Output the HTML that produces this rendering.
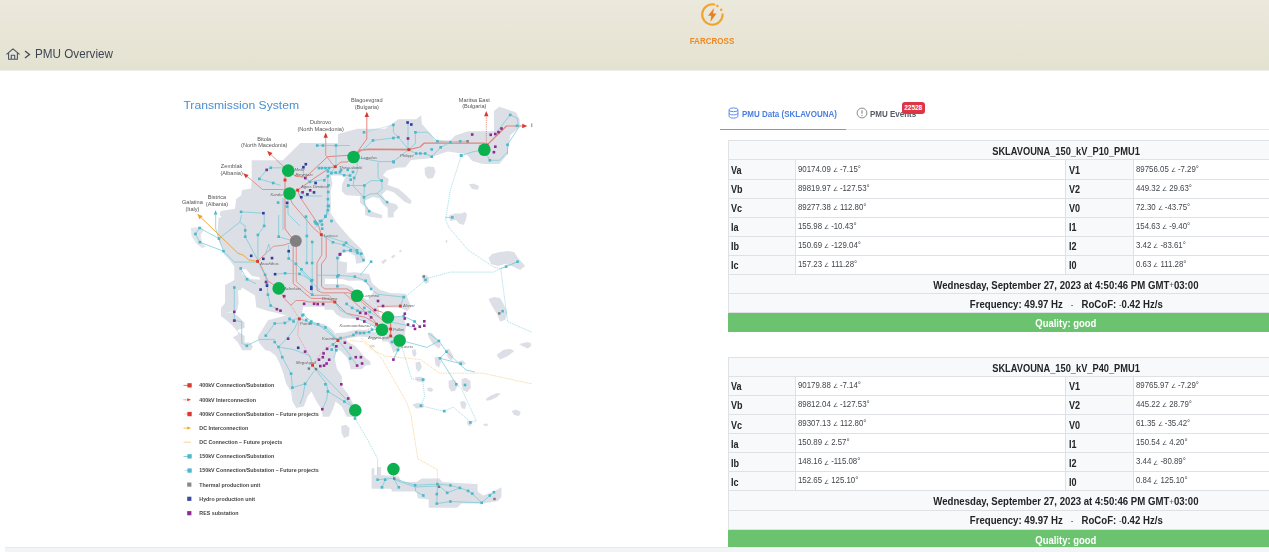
<!DOCTYPE html>
<html><head><meta charset="utf-8"><title>PMU Overview</title>
<style>
*{box-sizing:border-box;margin:0;padding:0}
html,body{width:1269px;height:552px;overflow:hidden;background:#fff;font-family:"Liberation Sans",sans-serif;}
#hdr{position:absolute;left:0;top:0;width:1269px;height:70.5px;background:linear-gradient(180deg,#ebe9dc 0%,#e8e5d6 55%,#e5e3d2 85%,#e3e2d2 100%);border-bottom:1px solid #efeee6}
#crumb{position:absolute;left:34.8px;top:47.3px;font-size:12.5px;transform:scaleX(0.935);transform-origin:0 50%;color:#3d4657;white-space:nowrap;line-height:14px}
#brand{position:absolute;left:682px;top:35.5px;width:60px;text-align:center;font-size:9.1px;font-weight:bold;color:#ec8a25;transform:scaleX(0.885);line-height:10px}
#tabs{position:absolute;left:720px;top:96px;width:560px;height:34px;border-bottom:1px solid #e3e6ec}
#tabs .act{position:absolute;left:0;top:32.7px;width:126px;height:1.6px;background:#6b9af0}
.tab{position:absolute;top:13.1px;font-size:9.2px;transform:scaleX(0.87);transform-origin:0 50%;font-weight:bold;line-height:10px;white-space:nowrap}
#badge{position:absolute;left:181.8px;top:6px;width:22.8px;height:12.4px;border-radius:3px;background:#dc3545;color:#fff;font-size:6.5px;font-weight:bold;text-align:center;line-height:12px}
table.pmu{position:absolute;left:727.8px;width:676px;border-collapse:collapse;table-layout:fixed;font-size:10px;color:#212529}
table.pmu td{height:19.09px;border:1px solid #dee2e6;padding:0 0 0 3px;vertical-align:middle;white-space:nowrap;overflow:hidden}
table.pmu td.l{background:#f8f9fa;font-weight:bold;font-size:10.4px;padding-left:2.5px;padding-top:1.8px}
.sx{display:inline-block;transform:scaleX(0.9);transform-origin:0 50%;white-space:nowrap}
td.l .sx{transform:scaleX(0.87)}
td.h .sx,td.q .sx{transform-origin:50% 50%}
td.q .sx{transform:scaleX(0.93)}
td.d .sx{transform:scaleX(0.934)}
td.v .sx{transform:scaleX(0.947)}
table.pmu td.v{font-size:8.3px;color:#40454b;padding-bottom:2px;padding-left:2.5px}
table.pmu td.h{background:#f8f9fa;font-weight:bold;text-align:center;font-size:10.3px;padding-left:0;padding-top:2.6px}
table.pmu td.q{background:#6cc36f;color:#fff;font-weight:bold;text-align:center;font-size:10.2px;padding-left:0;padding-top:2.8px;border-color:#6cc36f}
.a{font-size:6.2px;position:relative;top:0.2px}
.lt{font-weight:normal;color:#50555b;font-size:8.5px;position:relative;top:-0.3px}
#sbar{position:absolute;left:4.5px;top:546.9px;width:1265px;height:6px;background:#f3f4f6;border-top:1px solid #e8eaee}
</style></head><body>
<div id="hdr"></div>
<svg id="home" style="position:absolute;left:6px;top:47.5px" width="14" height="12" viewBox="0 0 14 12"><path d="M0.8 6.2 L7 0.9 L13.2 6.2 M2.6 5.2 V11.2 H11.4 V5.2 M5.3 11.2 V7.3 H8.7 V11.2" fill="none" stroke="#4a5568" stroke-width="1.1" stroke-linejoin="round" stroke-linecap="round"/></svg>
<svg style="position:absolute;left:23.5px;top:49.5px" width="7" height="9" viewBox="0 0 7 9"><path d="M1 1 L5.5 4.5 L1 8" fill="none" stroke="#3d4657" stroke-width="1.2"/></svg>
<div id="crumb">PMU Overview</div>
<svg id="logo" style="position:absolute;left:698px;top:0px" width="30" height="30" viewBox="0 0 30 30"><path d="M16.2 4.45 A10.2 10.2 0 1 0 24.6 14.3" fill="none" stroke="#f3a32b" stroke-width="2.1" stroke-linecap="round"/><circle cx="19.4" cy="6" r="1.25" fill="#f3a32b"/><circle cx="23.2" cy="9.7" r="1.25" fill="#f3a32b"/><path d="M16.1 8.1 L10 15.8 H13.3 L12.3 21.9 L18.5 13.4 H15 Z" fill="#ea7f20"/></svg>
<div id="brand">FARCROSS</div>

<div id="tabs"><div class="act"></div>
<svg style="position:absolute;left:8px;top:11px" width="11" height="12" viewBox="0 0 11 12"><ellipse cx="5.5" cy="2.8" rx="4.4" ry="1.9" fill="none" stroke="#5b8def" stroke-width="1"/><path d="M1.1 2.8 V9.2 C1.1 10.3 3.1 11.1 5.5 11.1 S9.9 10.3 9.9 9.2 V2.8 M1.1 6 C1.1 7.1 3.1 7.9 5.5 7.9 S9.9 7.1 9.9 6" fill="none" stroke="#5b8def" stroke-width="1"/></svg>
<div class="tab" style="left:21.5px;color:#4a7fe0">PMU Data (SKLAVOUNA)</div>
<svg style="position:absolute;left:135.5px;top:11px" width="12" height="12" viewBox="0 0 12 12"><circle cx="6" cy="6" r="4.9" fill="none" stroke="#6a6f77" stroke-width="0.8"/><path d="M6 3.2 V6.8" stroke="#6a6f77" stroke-width="0.9"/><circle cx="6" cy="8.5" r="0.55" fill="#6a6f77"/></svg>
<div class="tab" style="left:150px;color:#565c66">PMU Events</div>
<div id="badge">22528</div>
</div>

<table class="pmu" style="top:140.4px">
<colgroup><col style="width:67px"><col style="width:270.5px"><col style="width:67.5px"><col style="width:271px"></colgroup>
<tr><td class="h" colspan="4"><span class="sx">SKLAVOUNA_150_kV_P10_PMU1</span></td></tr>
<tr><td class="l"><span class="sx">Va</span></td><td class="v"><span class="sx">90174.09 <span class="a">∠</span> -7.15°</span></td><td class="l"><span class="sx">V1</span></td><td class="v"><span class="sx">89756.05 <span class="a">∠</span> -7.29°</span></td></tr>
<tr><td class="l"><span class="sx">Vb</span></td><td class="v"><span class="sx">89819.97 <span class="a">∠</span> -127.53°</span></td><td class="l"><span class="sx">V2</span></td><td class="v"><span class="sx">449.32 <span class="a">∠</span> 29.63°</span></td></tr>
<tr><td class="l"><span class="sx">Vc</span></td><td class="v"><span class="sx">89277.38 <span class="a">∠</span> 112.80°</span></td><td class="l"><span class="sx">V0</span></td><td class="v"><span class="sx">72.30 <span class="a">∠</span> -43.75°</span></td></tr>
<tr><td class="l"><span class="sx">Ia</span></td><td class="v"><span class="sx">155.98 <span class="a">∠</span> -10.43°</span></td><td class="l"><span class="sx">I1</span></td><td class="v"><span class="sx">154.63 <span class="a">∠</span> -9.40°</span></td></tr>
<tr><td class="l"><span class="sx">Ib</span></td><td class="v"><span class="sx">150.69 <span class="a">∠</span> -129.04°</span></td><td class="l"><span class="sx">I2</span></td><td class="v"><span class="sx">3.42 <span class="a">∠</span> -83.61°</span></td></tr>
<tr><td class="l"><span class="sx">Ic</span></td><td class="v"><span class="sx">157.23 <span class="a">∠</span> 111.28°</span></td><td class="l"><span class="sx">I0</span></td><td class="v"><span class="sx">0.63 <span class="a">∠</span> 111.28°</span></td></tr>
<tr><td class="h d" colspan="4"><span class="sx">Wednesday, September 27, 2023 at 4:50:46 PM GMT<span class="lt">+</span>03:00</span></td></tr>
<tr><td class="h d" colspan="4"><span class="sx">Frequency: 49.97 Hz &nbsp;&nbsp;<span class="lt">-</span>&nbsp;&nbsp; RoCoF: <span class="lt">-</span>0.42 Hz/s</span></td></tr>
<tr><td class="q" colspan="4"><span class="sx">Quality: good</span></td></tr>
</table>

<table class="pmu" style="top:356.9px">
<colgroup><col style="width:67px"><col style="width:270.5px"><col style="width:67.5px"><col style="width:271px"></colgroup>
<tr><td class="h" colspan="4"><span class="sx">SKLAVOUNA_150_kV_P40_PMU1</span></td></tr>
<tr><td class="l"><span class="sx">Va</span></td><td class="v"><span class="sx">90179.88 <span class="a">∠</span> -7.14°</span></td><td class="l"><span class="sx">V1</span></td><td class="v"><span class="sx">89765.97 <span class="a">∠</span> -7.29°</span></td></tr>
<tr><td class="l"><span class="sx">Vb</span></td><td class="v"><span class="sx">89812.04 <span class="a">∠</span> -127.53°</span></td><td class="l"><span class="sx">V2</span></td><td class="v"><span class="sx">445.22 <span class="a">∠</span> 28.79°</span></td></tr>
<tr><td class="l"><span class="sx">Vc</span></td><td class="v"><span class="sx">89307.13 <span class="a">∠</span> 112.80°</span></td><td class="l"><span class="sx">V0</span></td><td class="v"><span class="sx">61.35 <span class="a">∠</span> -35.42°</span></td></tr>
<tr><td class="l"><span class="sx">Ia</span></td><td class="v"><span class="sx">150.89 <span class="a">∠</span> 2.57°</span></td><td class="l"><span class="sx">I1</span></td><td class="v"><span class="sx">150.54 <span class="a">∠</span> 4.20°</span></td></tr>
<tr><td class="l"><span class="sx">Ib</span></td><td class="v"><span class="sx">148.16 <span class="a">∠</span> -115.08°</span></td><td class="l"><span class="sx">I2</span></td><td class="v"><span class="sx">3.44 <span class="a">∠</span> -80.89°</span></td></tr>
<tr><td class="l"><span class="sx">Ic</span></td><td class="v"><span class="sx">152.65 <span class="a">∠</span> 125.10°</span></td><td class="l"><span class="sx">I0</span></td><td class="v"><span class="sx">0.84 <span class="a">∠</span> 125.10°</span></td></tr>
<tr><td class="h d" colspan="4"><span class="sx">Wednesday, September 27, 2023 at 4:50:46 PM GMT<span class="lt">+</span>03:00</span></td></tr>
<tr><td class="h d" colspan="4"><span class="sx">Frequency: 49.97 Hz &nbsp;&nbsp;<span class="lt">-</span>&nbsp;&nbsp; RoCoF: <span class="lt">-</span>0.42 Hz/s</span></td></tr>
<tr><td class="q" colspan="4"><span class="sx">Quality: good</span></td></tr>
</table>

<!--MAP-->
<svg id="map" style="position:absolute;left:0;top:0;filter:blur(0.62px)" width="1269" height="552" viewBox="0 0 1269 552">
<polygon points="251.7,160.2 282.8,160.2 300.4,143.0 337.9,143.0 337.9,133.9 357.5,128.7 385.2,128.7 398.3,119.2 416.2,119.2 421.1,115.2 421.9,124.1 430.9,133.9 434.1,139.6 450.4,140.4 455.3,135.5 468.1,131.3 493.9,131.3 493.9,110.9 499.3,106.8 515.7,112.2 519.7,119.0 519.7,127.2 510.2,135.3 507.5,154.3 499.3,163.9 483.0,163.9 472.2,161.1 466.7,154.3 447.7,151.6 439.6,154.3 428.7,158.4 411.0,160.0 405.6,167.2 396.1,167.8 386.5,170.8 383.0,175.5 388.9,179.1 387.7,185.1 398.5,188.7 405.6,194.7 411.6,200.7 410.4,204.2 404.5,201.8 393.7,192.3 386.5,189.9 381.7,194.7 386.5,201.8 396.1,204.2 398.5,207.8 393.7,212.6 393.7,217.4 387.7,217.4 387.7,207.8 382.9,204.2 379.3,198.3 372.2,197.1 365.0,200.7 366.2,205.4 369.8,210.2 374.6,212.6 382.3,215.0 381.7,218.6 369.8,216.8 365.0,215.0 365.0,206.6 360.2,203.0 360.2,195.9 345.9,195.3 341.7,191.1 342.3,183.9 345.9,175.5 330.9,175.5 332.5,184.0 330.5,191.0 331.0,208.0 330.3,212.6 332.7,216.2 336.3,222.0 343.9,231.0 350.0,238.0 361.5,249.3 365.4,258.5 362.8,262.4 356.3,263.7 355.0,255.9 348.5,252.0 340.7,253.3 339.3,261.1 347.2,262.4 346.5,272.8 343.0,279.3 324.8,278.5 324.8,284.0 343.0,284.0 350.9,286.3 354.8,289.6 361.3,297.0 368.0,300.0 378.5,307.6 380.0,316.0 400.0,316.5 404.0,318.0 406.0,326.0 404.0,340.0 401.0,349.0 396.0,351.0 393.5,353.0 391.0,346.0 388.0,341.5 382.5,341.5 381.8,337.0 376.0,332.0 373.5,326.4 368.7,322.8 356.7,319.2 342.4,318.0 336.4,314.5 332.8,309.7 324.5,309.7 324.5,306.7 303.0,306.7 302.0,316.0 287.6,316.0 277.2,313.0 268.0,311.1 256.3,307.2 255.0,295.4 242.0,287.6 240.7,290.2 225.0,290.2 225.0,285.0 228.9,283.0 234.3,280.0 234.3,266.6 229.0,259.5 224.1,254.6 222.8,248.0 219.0,241.5 217.6,231.0 218.5,218.0 221.8,217.1 219.5,214.7 220.7,211.1 235.0,208.7 236.2,199.1 241.0,195.5 242.2,190.0 251.0,188.6 251.7,180.0" fill="#dcdfe5" />
<polygon points="241.6,269.3 246.1,269.3 251.6,275.7 259.7,277.5 259.7,279.8 250.7,279.0 242.5,274.4" fill="#fff" />
<polygon points="190.9,227.8 202.0,227.2 203.3,231.1 200.7,235.0 202.0,242.8 205.9,246.7 202.0,248.0 196.7,244.1 191.5,236.3" fill="#e2e5ea" />
<polygon points="225.0,290.0 238.0,290.0 238.7,303.0 236.7,311.0 225.0,312.4 232.8,312.4 238.0,316.3 244.6,322.8 244.6,328.0 238.0,329.4 238.0,334.6 232.8,337.2 238.0,342.4 242.0,350.2 251.0,350.2 253.0,346.3 249.8,342.4 244.6,342.4 244.6,336.0 237.0,331.0 232.0,325.0 226.0,320.0 221.0,316.0 221.0,308.0 225.0,303.0" fill="#dcdfe5" />
<polygon points="268.0,320.2 287.6,315.0 302.0,315.0 303.3,317.6 308.5,320.9 316.3,322.8 324.1,324.1 332.0,329.3 335.9,334.6 341.8,333.1 348.2,342.0 355.5,346.3 365.3,357.7 370.5,361.8 370.5,365.1 365.3,365.6 362.0,369.2 350.6,369.2 349.8,365.1 347.3,357.7 340.8,351.2 336.0,349.0 334.2,355.9 336.8,368.6 341.8,376.2 341.8,386.3 348.2,394.0 352.0,401.6 355.8,409.2 353.3,416.8 346.9,416.8 341.8,406.6 335.5,401.6 333.0,409.2 329.2,416.8 322.8,416.8 321.6,409.2 316.5,401.6 311.4,391.4 307.6,396.5 303.8,406.6 296.2,407.9 292.4,401.6 291.1,391.4 286.1,383.8 283.5,373.7 279.7,363.5 275.9,355.9 269.6,350.9 265.4,350.2 258.9,342.4 257.6,337.2 262.5,329.3" fill="#dcdfe5" />
<polygon points="336.0,333.0 344.8,332.5 349.6,331.2 359.1,329.5 368.7,331.0 376.0,332.0 381.8,337.0 376.0,339.0 368.0,337.0 358.0,336.5 350.0,338.0 342.0,339.0 336.0,340.0" fill="#dcdfe5" />
<polygon points="369.0,345.0 374.5,344.8 375.0,347.2 370.0,347.4" fill="#dcdfe5" />
<polygon points="343.0,279.3 346.5,272.8 355.0,272.2 369.3,274.1 372.0,283.3 379.8,289.8 390.2,293.0 405.9,293.7 408.5,300.2 411.5,307.0 407.0,311.0 400.2,307.4 378.5,307.4 368.0,300.0 374.3,290.2 366.5,283.7 361.3,280.4 348.3,280.8" fill="#dcdfe5" />
<polygon points="371.6,468.3 374.3,468.3 374.3,475.1 377.1,475.1 377.1,467.0 381.1,467.0 381.1,475.1 398.8,476.5 401.5,481.9 416.5,481.9 421.9,478.4 439.6,478.4 442.3,481.9 461.3,483.3 477.6,484.1 477.6,491.4 483.0,495.5 491.2,492.8 501.5,487.3 501.5,496.8 498.0,500.9 483.0,503.6 461.3,503.6 457.2,507.7 428.7,507.7 428.7,499.6 417.8,498.2 416.5,491.4 392.0,491.4 391.2,488.7 371.6,488.7" fill="#dcdfe5" />
<polygon points="424.6,168.0 428.0,166.6 434.0,167.0 435.5,172.0 433.0,178.0 428.0,178.8 425.0,175.0" fill="#dcdfe5" />
<polygon points="468.9,184.0 474.0,183.7 479.0,186.0 478.0,189.7 472.0,189.0" fill="#dcdfe5" />
<polygon points="449.0,215.5 455.0,213.5 461.0,213.5 465.0,212.0 467.0,214.5 465.5,221.0 463.5,225.0 459.0,223.5 456.0,220.0 450.0,221.0" fill="#dcdfe5" />
<polygon points="488.5,258.0 492.0,254.0 500.0,252.0 508.0,250.9 514.0,252.0 518.0,258.0 525.2,266.0 520.0,269.9 512.0,266.0 505.0,264.0 498.0,266.0 491.0,264.0" fill="#dcdfe5" />
<polygon points="488.5,299.0 494.0,297.0 500.0,298.0 503.0,303.0 507.5,312.0 505.0,320.0 500.0,321.5 497.0,314.0 492.0,306.0" fill="#dcdfe5" />
<polygon points="496.6,355.0 503.0,350.0 510.0,348.7 514.3,351.0 508.0,356.0 500.0,359.6" fill="#dcdfe5" />
<polygon points="519.0,344.0 528.0,342.0 532.0,344.0 524.0,347.0" fill="#dcdfe5" />
<polygon points="421.5,276.0 425.0,274.5 428.5,277.0 429.0,282.0 426.0,284.0 423.0,281.0" fill="#dcdfe5" />
<polygon points="341.2,426.0 346.0,424.8 349.5,428.0 349.0,436.0 344.0,438.0 341.5,433.0" fill="#dcdfe5" />
<polygon points="427.5,333.5 431.5,332.4 436.0,338.0 441.0,345.0 439.0,348.7 433.0,344.0 429.0,338.0" fill="#dcdfe5" />
<polygon points="445.5,350.0 449.0,348.7 453.2,356.0 452.0,360.9 448.0,358.0" fill="#dcdfe5" />
<polygon points="458.0,361.0 463.0,360.4 466.0,364.0 461.0,365.9" fill="#dcdfe5" />
<polygon points="412.0,350.0 415.5,349.0 416.5,354.0 415.0,357.0 412.5,355.0" fill="#dcdfe5" />
<polygon points="415.5,362.5 420.0,361.5 421.9,367.0 419.0,372.0 416.0,369.0" fill="#dcdfe5" />
<polygon points="434.5,357.5 439.0,356.8 441.0,362.0 439.0,367.7 435.5,365.0" fill="#dcdfe5" />
<polygon points="415.0,377.0 421.0,376.7 425.9,379.0 424.0,382.0 417.0,381.5" fill="#dcdfe5" />
<polygon points="427.0,388.0 431.0,387.6 433.5,390.0 431.0,392.0 428.0,391.0" fill="#dcdfe5" />
<polygon points="448.5,381.0 452.0,379.5 456.0,381.0 457.5,386.0 455.0,391.0 451.0,391.5 448.7,387.0" fill="#dcdfe5" />
<polygon points="461.7,379.0 466.0,377.8 470.4,381.0 470.8,388.0 467.0,392.2 463.0,390.0 461.5,385.0" fill="#dcdfe5" />
<polygon points="412.4,404.5 417.0,403.1 424.6,404.0 423.0,408.0 416.0,408.5" fill="#dcdfe5" />
<polygon points="460.0,402.0 464.0,400.7 466.5,404.0 465.0,409.3 461.5,408.0" fill="#dcdfe5" />
<polygon points="485.6,399.0 490.0,396.0 497.0,393.0 500.9,393.5 497.0,397.0 491.0,400.0 487.0,400.7" fill="#dcdfe5" />
<polygon points="511.7,411.0 516.0,409.5 520.8,412.0 519.0,415.9 514.0,415.0" fill="#dcdfe5" />
<polygon points="466.7,421.5 470.0,420.8 472.2,423.0 470.5,426.2 467.5,425.0" fill="#dcdfe5" />
<polygon points="483.0,424.0 487.0,423.5 488.5,425.5 485.0,426.3" fill="#dcdfe5" />
<polygon points="524.8,344.0 529.0,343.0 531.5,345.5 528.0,348.5 525.0,347.5" fill="#dcdfe5" />
<polygon points="445.5,240.5 447.0,239.8 447.6,242.0 446.0,243.0" fill="#dcdfe5" />
<polygon points="381.0,262.0 385.0,259.0 387.0,260.5 383.0,264.0" fill="#dcdfe5" />
<polygon points="391.0,257.0 394.0,254.5 395.5,256.0 392.5,258.5" fill="#dcdfe5" />
<polygon points="399.0,251.0 401.0,249.5 402.0,251.0 400.0,252.5" fill="#dcdfe5" />
<polyline points="244.7,174.3 262.6,189.5 283.8,189.5 289.5,193.6" fill="none" stroke="#e3827a" stroke-width="0.8" stroke-linejoin="round" />
<polyline points="268.4,152.1 287.4,170.3" fill="none" stroke="#e3827a" stroke-width="0.8" stroke-linejoin="round" />
<polyline points="285.0,170.0 285.0,198.8 285.0,228.7 290.9,236.8 295.8,240.9" fill="none" stroke="#e3827a" stroke-width="0.96" stroke-linejoin="round" />
<polyline points="289.6,193.4 297.7,190.1 314.0,178.4 330.3,167.6 335.2,166.7" fill="none" stroke="#e3827a" stroke-width="0.96" stroke-linejoin="round" />
<polyline points="287.4,170.3 296.0,176.5 305.9,177.1 327.6,156.7 348.0,155.3 353.4,157.5" fill="none" stroke="#e3827a" stroke-width="0.96" stroke-linejoin="round" />
<polyline points="325.7,134.1 325.7,155.3 333.0,164.8 335.2,166.7" fill="none" stroke="#e3827a" stroke-width="0.8" stroke-linejoin="round" />
<polyline points="335.2,166.7 341.0,162.0 347.0,162.0 353.4,157.5" fill="none" stroke="#e3827a" stroke-width="0.96" stroke-linejoin="round" />
<polyline points="353.4,157.5 366.8,139.0 366.8,113.0" fill="none" stroke="#e3827a" stroke-width="0.96" stroke-linejoin="round" />
<polyline points="353.4,157.5 360.2,150.2 368.4,149.2 408.8,149.6" fill="none" stroke="#e3827a" stroke-width="1.6" stroke-linejoin="round" />
<polyline points="408.8,149.6 420.0,147.0 424.0,143.2 484.0,143.2 487.0,145.0" fill="none" stroke="#e3827a" stroke-width="1.2800000000000002" stroke-linejoin="round" />
<polyline points="487.0,145.0 506.5,126.0 522.0,126.0" fill="none" stroke="#e3827a" stroke-width="1.1199999999999999" stroke-linejoin="round" />
<polyline points="486.3,143.0 486.3,112.5" fill="none" stroke="#d93a30" stroke-width="0.5599999999999999" stroke-linejoin="round" stroke-dasharray="1.2 1"/>
<polyline points="289.6,197.0 292.0,203.0 314.0,228.7 321.4,234.7" fill="none" stroke="#e3827a" stroke-width="0.8800000000000001" stroke-linejoin="round" />
<polyline points="297.7,190.1 300.0,197.0 318.0,224.0 321.4,234.7" fill="none" stroke="#e3827a" stroke-width="0.8800000000000001" stroke-linejoin="round" />
<polyline points="321.8,236.0 321.8,255.0 317.0,262.8 317.0,290.2 322.2,292.8 348.3,292.8 357.0,295.7" fill="none" stroke="#e3827a" stroke-width="0.8800000000000001" stroke-linejoin="round" />
<polyline points="326.2,237.0 326.2,257.6 321.5,264.1 321.5,286.3 324.8,288.9 347.0,288.9 353.5,292.8" fill="none" stroke="#e3827a" stroke-width="0.8800000000000001" stroke-linejoin="round" />
<polyline points="293.2,245.4 293.2,283.5 305.9,294.3 311.3,298.4 327.6,298.4 334.9,302.0" fill="none" stroke="#e3827a" stroke-width="0.8800000000000001" stroke-linejoin="round" />
<polyline points="296.3,246.0 296.3,281.5 307.5,291.5 313.0,295.3 329.0,295.3 334.9,302.0" fill="none" stroke="#e3827a" stroke-width="0.7200000000000001" stroke-linejoin="round" />
<polyline points="257.5,261.3 273.3,246.4 284.1,245.0 295.8,240.9" fill="none" stroke="#e3827a" stroke-width="0.8" stroke-linejoin="round" />
<polyline points="257.5,261.3 261.0,265.8 267.8,280.8 278.7,288.4 284.1,298.4 290.9,305.2 296.0,300.5 303.0,300.5 309.0,302.0 334.9,302.0" fill="none" stroke="#e3827a" stroke-width="0.8800000000000001" stroke-linejoin="round" />
<polyline points="334.9,302.0 346.6,313.4 365.7,317.4 372.4,321.5 376.5,324.2 382.0,329.7" fill="none" stroke="#e3827a" stroke-width="0.8800000000000001" stroke-linejoin="round" />
<polyline points="343.9,292.8 352.0,300.0 372.0,318.0 382.0,329.7" fill="none" stroke="#e3827a" stroke-width="0.8" stroke-linejoin="round" />
<polyline points="357.0,295.7 373.5,309.3 381.6,312.0 387.9,317.4" fill="none" stroke="#e3827a" stroke-width="0.96" stroke-linejoin="round" />
<polyline points="347.0,288.9 364.0,304.0 375.0,313.0 384.0,322.0" fill="none" stroke="#e3827a" stroke-width="0.7200000000000001" stroke-linejoin="round" />
<polyline points="377.0,306.5 400.4,306.0" fill="none" stroke="#e3827a" stroke-width="0.7200000000000001" stroke-linejoin="round" />
<polyline points="387.9,317.4 390.6,322.0 390.6,336.0" fill="none" stroke="#e3827a" stroke-width="1.2800000000000002" stroke-linejoin="round" />
<polyline points="376.5,324.2 390.6,329.0" fill="none" stroke="#e3827a" stroke-width="0.8" stroke-linejoin="round" />
<polyline points="290.9,305.2 299.3,318.8 297.7,335.0 311.3,359.6 312.7,365.0" fill="none" stroke="#e58078" stroke-width="0.6" stroke-linejoin="round" stroke-dasharray="1 0.7"/>
<polyline points="337.9,340.5 322.0,352.0 312.7,365.0" fill="none" stroke="#e58078" stroke-width="0.6" stroke-linejoin="round" stroke-dasharray="1 0.7"/>
<polyline points="337.9,340.5 360.0,333.7 372.4,327.0" fill="none" stroke="#e58078" stroke-width="0.6" stroke-linejoin="round" stroke-dasharray="1 0.7"/>
<polyline points="198.5,215.1 237.9,253.2 243.0,255.0 248.8,259.9 257.5,261.3" fill="none" stroke="#f4a11c" stroke-width="0.9" stroke-linejoin="round" />
<polyline points="350.0,340.5 363.5,341.8 370.3,348.6 385.0,356.0 420.5,359.6 439.6,373.2 483.0,373.2 532.0,384.0" fill="none" stroke="#f6bb62" stroke-width="0.6" stroke-linejoin="round" stroke-dasharray="1 0.7"/>
<polyline points="361.0,338.0 368.9,344.6 382.5,359.6 406.9,403.0 411.0,415.3 417.8,458.8 437.4,469.7 437.4,483.0" fill="none" stroke="#f6bb62" stroke-width="0.6" stroke-linejoin="round" stroke-dasharray="1 0.7"/>
<polyline points="259.3,178.9 266.7,169.9 270.8,167.8 283.8,167.8" fill="none" stroke="#78cad7" stroke-width="0.75" stroke-linejoin="round" />
<polyline points="259.3,178.9 273.2,183.0 280.5,185.4" fill="none" stroke="#78cad7" stroke-width="0.75" stroke-linejoin="round" />
<polyline points="317.2,145.5 336.0,145.5 350.0,145.5" fill="none" stroke="#78cad7" stroke-width="0.75" stroke-linejoin="round" />
<polyline points="336.0,145.5 336.0,166.7" fill="none" stroke="#78cad7" stroke-width="0.75" stroke-linejoin="round" />
<polyline points="335.2,167.0 327.8,176.5 323.8,179.7 309.9,181.9" fill="none" stroke="#78cad7" stroke-width="0.75" stroke-linejoin="round" />
<polyline points="327.8,176.5 327.8,214.8" fill="none" stroke="#78cad7" stroke-width="0.75" stroke-linejoin="round" />
<polyline points="283.0,198.0 283.0,230.0" fill="none" stroke="#78cad7" stroke-width="0.75" stroke-linejoin="round" />
<polyline points="288.0,198.0 288.0,214.0 300.0,226.0" fill="none" stroke="#78cad7" stroke-width="0.75" stroke-linejoin="round" />
<polyline points="303.4,167.2 303.4,176.0 309.9,181.9" fill="none" stroke="#78cad7" stroke-width="0.75" stroke-linejoin="round" />
<polyline points="297.7,190.1 305.0,196.0 322.0,196.0" fill="none" stroke="#78cad7" stroke-width="0.75" stroke-linejoin="round" />
<polyline points="241.1,211.9 263.4,213.2" fill="none" stroke="#78cad7" stroke-width="0.75" stroke-linejoin="round" />
<polyline points="215.7,212.4 215.7,228.7 218.9,238.6 223.5,251.2 234.3,262.1 257.9,262.1" fill="none" stroke="#78cad7" stroke-width="0.75" stroke-linejoin="round" />
<polyline points="218.9,238.6 239.8,222.2 245.2,225.9 245.2,236.7 257.9,260.3" fill="none" stroke="#78cad7" stroke-width="0.75" stroke-linejoin="round" />
<polyline points="239.8,222.2 241.6,215.0" fill="none" stroke="#78cad7" stroke-width="0.75" stroke-linejoin="round" />
<polyline points="199.6,228.0 195.4,234.0 199.9,242.2 223.5,251.2" fill="none" stroke="#78cad7" stroke-width="0.75" stroke-linejoin="round" />
<polyline points="199.6,228.0 218.9,238.6" fill="none" stroke="#78cad7" stroke-width="0.75" stroke-linejoin="round" />
<polyline points="264.2,215.0 264.2,225.9 257.9,234.9 257.9,260.3" fill="none" stroke="#78cad7" stroke-width="0.75" stroke-linejoin="round" />
<polyline points="265.1,254.9 268.8,244.0 270.6,251.2" fill="none" stroke="#78cad7" stroke-width="0.75" stroke-linejoin="round" />
<polyline points="278.7,215.0 278.7,236.7 290.0,240.0" fill="none" stroke="#78cad7" stroke-width="0.75" stroke-linejoin="round" />
<polyline points="288.7,244.9 288.7,258.5 295.9,263.9 301.4,269.3 312.2,280.2 312.2,294.7" fill="none" stroke="#78cad7" stroke-width="0.75" stroke-linejoin="round" />
<polyline points="275.1,274.2 285.1,273.3 299.6,273.9 312.2,280.2" fill="none" stroke="#78cad7" stroke-width="0.75" stroke-linejoin="round" />
<polyline points="306.8,215.0 306.8,263.0" fill="none" stroke="#78cad7" stroke-width="0.75" stroke-linejoin="round" />
<polyline points="312.2,242.0 312.2,280.2" fill="none" stroke="#78cad7" stroke-width="0.75" stroke-linejoin="round" />
<polyline points="259.7,265.7 265.1,274.8 267.0,283.8 267.9,294.7 270.6,305.6 277.8,309.2" fill="none" stroke="#78cad7" stroke-width="0.75" stroke-linejoin="round" />
<polyline points="240.7,268.4 247.0,279.3 256.1,283.8" fill="none" stroke="#78cad7" stroke-width="0.75" stroke-linejoin="round" />
<polyline points="234.3,287.5 234.3,320.4 241.7,321.7 241.7,343.2 246.8,345.8 259.4,339.4 274.7,339.4" fill="none" stroke="#78cad7" stroke-width="0.75" stroke-linejoin="round" />
<polyline points="321.4,234.7 333.0,242.3 343.9,245.0 360.2,253.2" fill="none" stroke="#78cad7" stroke-width="0.75" stroke-linejoin="round" />
<polyline points="321.4,234.7 346.1,242.8 357.0,250.4 363.5,260.2" fill="none" stroke="#78cad7" stroke-width="0.75" stroke-linejoin="round" />
<polyline points="337.4,258.0 337.4,286.3" fill="none" stroke="#78cad7" stroke-width="0.75" stroke-linejoin="round" />
<polyline points="327.6,201.5 327.6,207.0 326.3,215.1 322.2,220.5 315.4,227.3" fill="none" stroke="#78cad7" stroke-width="0.75" stroke-linejoin="round" />
<polyline points="325.4,216.7 328.7,205.9" fill="none" stroke="#78cad7" stroke-width="0.75" stroke-linejoin="round" />
<polyline points="316.7,275.3 338.5,275.3 354.8,276.7 365.7,280.8 371.1,288.9 377.9,294.3 403.7,297.1 400.4,306.0" fill="none" stroke="#78cad7" stroke-width="0.75" stroke-linejoin="round" />
<polyline points="371.1,261.7 360.2,275.3" fill="none" stroke="#78cad7" stroke-width="0.75" stroke-linejoin="round" />
<polyline points="343.9,250.9 350.7,250.3 357.5,253.0" fill="none" stroke="#78cad7" stroke-width="0.75" stroke-linejoin="round" />
<polyline points="300.4,270.0 311.3,282.0 320.0,290.0" fill="none" stroke="#78cad7" stroke-width="0.75" stroke-linejoin="round" />
<polyline points="387.9,317.4 403.7,316.1 414.6,321.5 420.0,327.0" fill="none" stroke="#78cad7" stroke-width="0.75" stroke-linejoin="round" />
<polyline points="399.6,340.5 398.0,350.0 393.4,359.6" fill="none" stroke="#78cad7" stroke-width="0.75" stroke-linejoin="round" />
<polyline points="346.6,303.9 352.1,307.9 357.5,310.7 369.7,312.0 380.0,318.0" fill="none" stroke="#78cad7" stroke-width="0.75" stroke-linejoin="round" />
<polyline points="334.9,302.0 340.0,310.0 352.0,316.0 364.3,321.5 376.0,327.0" fill="none" stroke="#78cad7" stroke-width="0.75" stroke-linejoin="round" />
<polyline points="289.6,318.8 293.6,321.5" fill="none" stroke="#78cad7" stroke-width="0.75" stroke-linejoin="round" />
<polyline points="303.2,314.7 311.3,321.5 318.1,324.2 337.9,340.5" fill="none" stroke="#78cad7" stroke-width="0.75" stroke-linejoin="round" />
<polyline points="311.3,280.8 311.3,288.9" fill="none" stroke="#78cad7" stroke-width="0.75" stroke-linejoin="round" />
<polyline points="382.0,329.7 372.0,329.6 369.0,332.0 364.0,333.0 360.2,333.0 356.3,332.5 353.4,335.0 340.6,338.0 337.9,340.5" fill="none" stroke="#78cad7" stroke-width="0.75" stroke-linejoin="round" />
<polyline points="390.6,336.0 399.6,340.5" fill="none" stroke="#78cad7" stroke-width="0.75" stroke-linejoin="round" />
<polyline points="390.6,322.0 405.0,325.0 412.0,327.0" fill="none" stroke="#78cad7" stroke-width="0.75" stroke-linejoin="round" />
<polyline points="265.8,335.6 274.7,323.5 284.8,323.0 291.1,319.9 299.2,318.4" fill="none" stroke="#78cad7" stroke-width="0.75" stroke-linejoin="round" />
<polyline points="274.7,342.0 278.5,347.0 282.3,357.2 291.1,373.7 292.4,387.6 305.1,383.8 314.0,371.1" fill="none" stroke="#78cad7" stroke-width="0.75" stroke-linejoin="round" />
<polyline points="278.5,347.0 293.7,349.6 310.2,355.9 312.2,365.3" fill="none" stroke="#78cad7" stroke-width="0.75" stroke-linejoin="round" />
<polyline points="278.5,347.0 287.3,338.2 294.9,328.0 299.2,318.4" fill="none" stroke="#78cad7" stroke-width="0.75" stroke-linejoin="round" />
<polyline points="312.2,365.3 326.6,383.8 327.9,391.4 344.4,401.6 355.8,409.2" fill="none" stroke="#78cad7" stroke-width="0.75" stroke-linejoin="round" />
<polyline points="312.2,365.3 321.6,373.7 352.0,405.4" fill="none" stroke="#78cad7" stroke-width="0.75" stroke-linejoin="round" />
<polyline points="338.0,340.2 333.0,344.5 336.3,350.3 334.0,358.0" fill="none" stroke="#78cad7" stroke-width="0.75" stroke-linejoin="round" />
<polyline points="338.0,340.2 346.9,350.9 357.1,365.6" fill="none" stroke="#78cad7" stroke-width="0.75" stroke-linejoin="round" />
<polyline points="299.2,318.4 310.2,323.0 325.4,327.5 338.0,340.2" fill="none" stroke="#78cad7" stroke-width="0.75" stroke-linejoin="round" />
<polyline points="322.3,409.2 326.6,400.0 327.9,391.4" fill="none" stroke="#78cad7" stroke-width="0.75" stroke-linejoin="round" />
<polyline points="305.1,383.8 303.0,396.0 300.0,404.0" fill="none" stroke="#78cad7" stroke-width="0.75" stroke-linejoin="round" />
<polyline points="393.4,124.9 393.4,132.3 398.3,137.2 408.0,148.6" fill="none" stroke="#78cad7" stroke-width="0.75" stroke-linejoin="round" />
<polyline points="373.0,140.4 393.4,138.0 398.3,137.2" fill="none" stroke="#78cad7" stroke-width="0.75" stroke-linejoin="round" />
<polyline points="353.6,157.0 366.0,147.0 373.0,140.4" fill="none" stroke="#78cad7" stroke-width="0.75" stroke-linejoin="round" />
<polyline points="408.0,122.5 408.0,148.6" fill="none" stroke="#78cad7" stroke-width="0.75" stroke-linejoin="round" />
<polyline points="415.4,132.3 427.6,132.3 437.4,141.3 450.4,142.1 460.2,141.3 467.6,141.3" fill="none" stroke="#78cad7" stroke-width="0.75" stroke-linejoin="round" />
<polyline points="415.4,132.3 415.4,143.7 408.9,149.4" fill="none" stroke="#78cad7" stroke-width="0.75" stroke-linejoin="round" />
<polyline points="408.9,150.0 416.2,153.5 425.2,153.5 431.7,156.7 440.7,147.3 450.4,142.1" fill="none" stroke="#78cad7" stroke-width="0.75" stroke-linejoin="round" />
<polyline points="353.6,157.0 380.0,161.6 393.4,161.6 408.0,150.0" fill="none" stroke="#78cad7" stroke-width="0.75" stroke-linejoin="round" />
<polyline points="507.5,154.3 507.5,144.8 519.0,127.0 517.0,118.0 510.2,114.9 503.0,124.0 497.0,132.0" fill="none" stroke="#78cad7" stroke-width="0.75" stroke-linejoin="round" />
<polyline points="484.4,149.7 489.8,160.3 499.3,160.3 507.5,152.0" fill="none" stroke="#78cad7" stroke-width="0.75" stroke-linejoin="round" />
<polyline points="461.3,155.7 472.0,152.0 484.4,149.7" fill="none" stroke="#78cad7" stroke-width="0.75" stroke-linejoin="round" />
<polyline points="364.0,132.3 393.4,124.9" fill="none" stroke="#78cad7" stroke-width="0.6" stroke-linejoin="round" stroke-dasharray="1.2 0.8"/>
<polyline points="461.3,155.7 450.4,189.7 445.5,219.6 449.1,227.7 468.1,250.0 493.9,267.2 500.7,268.5" fill="none" stroke="#78cad7" stroke-width="0.6" stroke-linejoin="round" stroke-dasharray="1.2 0.8"/>
<polyline points="445.5,217.4 452.3,217.4" fill="none" stroke="#78cad7" stroke-width="0.75" stroke-linejoin="round" />
<polyline points="348.3,185.5 364.4,185.5 371.0,180.6 381.7,180.6 382.3,188.7 377.0,193.5 369.8,194.1 364.0,197.3 353.0,185.7" fill="none" stroke="#78cad7" stroke-width="0.75" stroke-linejoin="round" />
<polyline points="377.0,193.5 387.1,202.1" fill="none" stroke="#78cad7" stroke-width="0.75" stroke-linejoin="round" />
<polyline points="364.0,197.3 364.4,204.2 369.2,211.2" fill="none" stroke="#78cad7" stroke-width="0.75" stroke-linejoin="round" />
<polyline points="378.1,162.4 378.1,177.9 381.7,180.6" fill="none" stroke="#78cad7" stroke-width="0.75" stroke-linejoin="round" />
<polyline points="357.2,162.4 357.2,172.0 354.2,177.9 353.0,185.7" fill="none" stroke="#78cad7" stroke-width="0.75" stroke-linejoin="round" />
<polyline points="364.4,185.5 364.0,197.3" fill="none" stroke="#78cad7" stroke-width="0.75" stroke-linejoin="round" />
<polyline points="319.0,168.1 335.1,167.2" fill="none" stroke="#78cad7" stroke-width="0.75" stroke-linejoin="round" />
<polyline points="327.9,171.4 335.7,172.6 344.1,175.3 350.0,175.5" fill="none" stroke="#78cad7" stroke-width="0.75" stroke-linejoin="round" />
<polyline points="405.1,297.1 424.6,280.8 428.7,278.0 450.4,272.1 493.9,272.1 500.7,268.5 506.1,266.6 517.6,261.7" fill="none" stroke="#78cad7" stroke-width="0.6" stroke-linejoin="round" stroke-dasharray="1.2 0.8"/>
<polyline points="500.7,268.5 503.4,288.9 507.5,321.5 532.0,332.4" fill="none" stroke="#78cad7" stroke-width="0.6" stroke-linejoin="round" stroke-dasharray="1.2 0.8"/>
<polyline points="500.7,268.5 506.1,266.6 517.6,261.7" fill="none" stroke="#78cad7" stroke-width="0.75" stroke-linejoin="round" />
<polyline points="398.7,339.8 427.0,347.4 438.9,340.9 446.5,351.7 440.0,358.3 460.7,363.7" fill="none" stroke="#78cad7" stroke-width="0.75" stroke-linejoin="round" />
<polyline points="440.0,358.3 456.3,384.3" fill="none" stroke="#78cad7" stroke-width="0.75" stroke-linejoin="round" />
<polyline points="438.9,340.9 428.0,333.0" fill="none" stroke="#78cad7" stroke-width="0.75" stroke-linejoin="round" />
<polyline points="446.5,351.7 466.0,370.0 475.0,372.0" fill="none" stroke="#78cad7" stroke-width="0.75" stroke-linejoin="round" />
<polyline points="402.0,347.4 411.7,378.9 422.6,380.0 424.6,396.3 421.1,405.8 443.6,411.3 453.2,407.2 470.8,422.1 476.3,420.8 461.3,388.2 455.9,383.3" fill="none" stroke="#78cad7" stroke-width="0.6" stroke-linejoin="round" stroke-dasharray="1.2 0.8"/>
<polyline points="399.6,345.0 393.4,359.6" fill="none" stroke="#78cad7" stroke-width="0.6" stroke-linejoin="round" stroke-dasharray="1.2 0.8"/>
<polyline points="355.3,410.4 354.8,418.0 367.6,439.8 377.6,458.8 377.6,475.1" fill="none" stroke="#78cad7" stroke-width="0.6" stroke-linejoin="round" stroke-dasharray="1.2 0.8"/>
<polyline points="377.6,479.7 393.4,478.4 415.1,485.2 438.2,484.1 450.4,485.4 459.9,487.9 468.1,490.9 472.2,493.6 481.7,502.8 489.8,495.5 493.9,492.2" fill="none" stroke="#78cad7" stroke-width="0.75" stroke-linejoin="round" />
<polyline points="393.4,478.4 398.8,487.3" fill="none" stroke="#78cad7" stroke-width="0.75" stroke-linejoin="round" />
<polyline points="394.2,479.6 415.1,487.0 438.2,486.0" fill="none" stroke="#78cad7" stroke-width="0.75" stroke-linejoin="round" />
<polyline points="385.2,479.7 382.0,487.3" fill="none" stroke="#78cad7" stroke-width="0.75" stroke-linejoin="round" />
<polyline points="436.8,503.6 450.4,501.5 481.7,502.8" fill="none" stroke="#78cad7" stroke-width="0.75" stroke-linejoin="round" />
<polyline points="437.4,484.1 436.8,503.6" fill="none" stroke="#78cad7" stroke-width="0.75" stroke-linejoin="round" />
<polyline points="437.4,484.1 447.2,492.8 459.9,487.9" fill="none" stroke="#78cad7" stroke-width="0.75" stroke-linejoin="round" />
<polyline points="415.1,485.2 415.7,491.4 423.3,495.5" fill="none" stroke="#78cad7" stroke-width="0.75" stroke-linejoin="round" />
<polyline points="393.4,469.1 393.8,478.4" fill="none" stroke="#78cad7" stroke-width="0.75" stroke-linejoin="round" />
<rect x="258.0" y="177.6" width="2.6" height="2.6" fill="#4bb8cb"/>
<rect x="269.5" y="166.5" width="2.6" height="2.6" fill="#4bb8cb"/>
<rect x="271.9" y="181.7" width="2.6" height="2.6" fill="#4bb8cb"/>
<rect x="315.9" y="144.2" width="2.6" height="2.6" fill="#4bb8cb"/>
<rect x="321.6" y="144.2" width="2.6" height="2.6" fill="#4bb8cb"/>
<rect x="334.7" y="144.2" width="2.6" height="2.6" fill="#4bb8cb"/>
<rect x="276.8" y="201.3" width="2.6" height="2.6" fill="#4bb8cb"/>
<rect x="285.8" y="205.3" width="2.6" height="2.6" fill="#4bb8cb"/>
<rect x="239.8" y="210.6" width="2.6" height="2.6" fill="#4bb8cb"/>
<rect x="198.3" y="226.7" width="2.6" height="2.6" fill="#4bb8cb"/>
<rect x="194.1" y="232.7" width="2.6" height="2.6" fill="#4bb8cb"/>
<rect x="198.6" y="240.9" width="2.6" height="2.6" fill="#4bb8cb"/>
<rect x="217.6" y="237.3" width="2.6" height="2.6" fill="#4bb8cb"/>
<rect x="222.2" y="249.9" width="2.6" height="2.6" fill="#4bb8cb"/>
<rect x="243.9" y="229.1" width="2.6" height="2.6" fill="#4bb8cb"/>
<rect x="243.9" y="235.4" width="2.6" height="2.6" fill="#4bb8cb"/>
<rect x="262.9" y="224.6" width="2.6" height="2.6" fill="#4bb8cb"/>
<rect x="256.6" y="233.6" width="2.6" height="2.6" fill="#4bb8cb"/>
<rect x="239.4" y="267.1" width="2.6" height="2.6" fill="#4bb8cb"/>
<rect x="245.7" y="278.0" width="2.6" height="2.6" fill="#4bb8cb"/>
<rect x="233.0" y="286.2" width="2.6" height="2.6" fill="#4bb8cb"/>
<rect x="287.4" y="257.2" width="2.6" height="2.6" fill="#4bb8cb"/>
<rect x="294.6" y="262.6" width="2.6" height="2.6" fill="#4bb8cb"/>
<rect x="300.1" y="268.0" width="2.6" height="2.6" fill="#4bb8cb"/>
<rect x="305.5" y="261.7" width="2.6" height="2.6" fill="#4bb8cb"/>
<rect x="310.9" y="261.7" width="2.6" height="2.6" fill="#4bb8cb"/>
<rect x="310.9" y="278.9" width="2.6" height="2.6" fill="#4bb8cb"/>
<rect x="310.9" y="293.4" width="2.6" height="2.6" fill="#4bb8cb"/>
<rect x="283.8" y="272.0" width="2.6" height="2.6" fill="#4bb8cb"/>
<rect x="298.3" y="272.6" width="2.6" height="2.6" fill="#4bb8cb"/>
<rect x="305.5" y="234.7" width="2.6" height="2.6" fill="#4bb8cb"/>
<rect x="310.9" y="240.7" width="2.6" height="2.6" fill="#4bb8cb"/>
<rect x="304.6" y="215.4" width="2.6" height="2.6" fill="#4bb8cb"/>
<rect x="263.8" y="273.5" width="2.6" height="2.6" fill="#4bb8cb"/>
<rect x="265.7" y="282.5" width="2.6" height="2.6" fill="#4bb8cb"/>
<rect x="266.6" y="293.4" width="2.6" height="2.6" fill="#4bb8cb"/>
<rect x="269.3" y="304.3" width="2.6" height="2.6" fill="#4bb8cb"/>
<rect x="277.4" y="235.4" width="2.6" height="2.6" fill="#4bb8cb"/>
<rect x="344.8" y="241.5" width="2.6" height="2.6" fill="#4bb8cb"/>
<rect x="349.1" y="249.1" width="2.6" height="2.6" fill="#4bb8cb"/>
<rect x="355.7" y="249.1" width="2.6" height="2.6" fill="#4bb8cb"/>
<rect x="360.0" y="252.4" width="2.6" height="2.6" fill="#4bb8cb"/>
<rect x="362.2" y="258.9" width="2.6" height="2.6" fill="#4bb8cb"/>
<rect x="336.1" y="256.7" width="2.6" height="2.6" fill="#4bb8cb"/>
<rect x="336.1" y="275.2" width="2.6" height="2.6" fill="#4bb8cb"/>
<rect x="336.1" y="285.0" width="2.6" height="2.6" fill="#4bb8cb"/>
<rect x="324.1" y="215.4" width="2.6" height="2.6" fill="#4bb8cb"/>
<rect x="327.4" y="204.6" width="2.6" height="2.6" fill="#4bb8cb"/>
<rect x="318.7" y="219.8" width="2.6" height="2.6" fill="#4bb8cb"/>
<rect x="320.9" y="227.4" width="2.6" height="2.6" fill="#4bb8cb"/>
<rect x="314.4" y="222.0" width="2.6" height="2.6" fill="#4bb8cb"/>
<rect x="342.6" y="249.6" width="2.6" height="2.6" fill="#4bb8cb"/>
<rect x="349.4" y="249.0" width="2.6" height="2.6" fill="#4bb8cb"/>
<rect x="356.2" y="251.7" width="2.6" height="2.6" fill="#4bb8cb"/>
<rect x="369.8" y="260.4" width="2.6" height="2.6" fill="#4bb8cb"/>
<rect x="331.7" y="241.0" width="2.6" height="2.6" fill="#4bb8cb"/>
<rect x="342.6" y="243.7" width="2.6" height="2.6" fill="#4bb8cb"/>
<rect x="345.3" y="302.6" width="2.6" height="2.6" fill="#4bb8cb"/>
<rect x="350.8" y="306.6" width="2.6" height="2.6" fill="#4bb8cb"/>
<rect x="356.2" y="309.4" width="2.6" height="2.6" fill="#4bb8cb"/>
<rect x="363.0" y="306.6" width="2.6" height="2.6" fill="#4bb8cb"/>
<rect x="368.4" y="310.7" width="2.6" height="2.6" fill="#4bb8cb"/>
<rect x="288.3" y="317.5" width="2.6" height="2.6" fill="#4bb8cb"/>
<rect x="292.3" y="320.2" width="2.6" height="2.6" fill="#4bb8cb"/>
<rect x="301.9" y="313.4" width="2.6" height="2.6" fill="#4bb8cb"/>
<rect x="310.0" y="320.2" width="2.6" height="2.6" fill="#4bb8cb"/>
<rect x="316.8" y="322.9" width="2.6" height="2.6" fill="#4bb8cb"/>
<rect x="310.0" y="279.5" width="2.6" height="2.6" fill="#4bb8cb"/>
<rect x="402.4" y="295.8" width="2.6" height="2.6" fill="#4bb8cb"/>
<rect x="402.4" y="314.8" width="2.6" height="2.6" fill="#4bb8cb"/>
<rect x="413.3" y="320.2" width="2.6" height="2.6" fill="#4bb8cb"/>
<rect x="353.5" y="275.4" width="2.6" height="2.6" fill="#4bb8cb"/>
<rect x="364.4" y="279.5" width="2.6" height="2.6" fill="#4bb8cb"/>
<rect x="369.8" y="287.6" width="2.6" height="2.6" fill="#4bb8cb"/>
<rect x="337.2" y="274.0" width="2.6" height="2.6" fill="#4bb8cb"/>
<rect x="232.8" y="319.1" width="2.6" height="2.6" fill="#4bb8cb"/>
<rect x="245.5" y="344.5" width="2.6" height="2.6" fill="#4bb8cb"/>
<rect x="264.5" y="334.3" width="2.6" height="2.6" fill="#4bb8cb"/>
<rect x="273.4" y="322.2" width="2.6" height="2.6" fill="#4bb8cb"/>
<rect x="283.5" y="321.7" width="2.6" height="2.6" fill="#4bb8cb"/>
<rect x="273.4" y="340.7" width="2.6" height="2.6" fill="#4bb8cb"/>
<rect x="277.2" y="345.7" width="2.6" height="2.6" fill="#4bb8cb"/>
<rect x="281.0" y="355.9" width="2.6" height="2.6" fill="#4bb8cb"/>
<rect x="289.8" y="372.4" width="2.6" height="2.6" fill="#4bb8cb"/>
<rect x="291.1" y="386.3" width="2.6" height="2.6" fill="#4bb8cb"/>
<rect x="303.8" y="382.5" width="2.6" height="2.6" fill="#4bb8cb"/>
<rect x="324.1" y="383.0" width="2.6" height="2.6" fill="#4bb8cb"/>
<rect x="326.6" y="390.1" width="2.6" height="2.6" fill="#4bb8cb"/>
<rect x="343.1" y="400.3" width="2.6" height="2.6" fill="#4bb8cb"/>
<rect x="331.7" y="343.2" width="2.6" height="2.6" fill="#4bb8cb"/>
<rect x="335.0" y="349.0" width="2.6" height="2.6" fill="#4bb8cb"/>
<rect x="330.4" y="348.3" width="2.6" height="2.6" fill="#4bb8cb"/>
<rect x="348.9" y="357.2" width="2.6" height="2.6" fill="#4bb8cb"/>
<rect x="301.2" y="314.1" width="2.6" height="2.6" fill="#4bb8cb"/>
<rect x="305.0" y="318.6" width="2.6" height="2.6" fill="#4bb8cb"/>
<rect x="308.9" y="321.7" width="2.6" height="2.6" fill="#4bb8cb"/>
<rect x="324.1" y="326.2" width="2.6" height="2.6" fill="#4bb8cb"/>
<rect x="362.7" y="131.0" width="2.6" height="2.6" fill="#4bb8cb"/>
<rect x="392.1" y="123.6" width="2.6" height="2.6" fill="#4bb8cb"/>
<rect x="392.1" y="136.7" width="2.6" height="2.6" fill="#4bb8cb"/>
<rect x="397.0" y="135.9" width="2.6" height="2.6" fill="#4bb8cb"/>
<rect x="371.7" y="139.1" width="2.6" height="2.6" fill="#4bb8cb"/>
<rect x="414.1" y="131.0" width="2.6" height="2.6" fill="#4bb8cb"/>
<rect x="436.1" y="140.0" width="2.6" height="2.6" fill="#4bb8cb"/>
<rect x="449.1" y="140.8" width="2.6" height="2.6" fill="#4bb8cb"/>
<rect x="458.9" y="140.0" width="2.6" height="2.6" fill="#4bb8cb"/>
<rect x="414.9" y="152.2" width="2.6" height="2.6" fill="#4bb8cb"/>
<rect x="419.0" y="152.2" width="2.6" height="2.6" fill="#4bb8cb"/>
<rect x="423.9" y="152.2" width="2.6" height="2.6" fill="#4bb8cb"/>
<rect x="430.4" y="155.4" width="2.6" height="2.6" fill="#4bb8cb"/>
<rect x="430.4" y="148.1" width="2.6" height="2.6" fill="#4bb8cb"/>
<rect x="439.4" y="146.0" width="2.6" height="2.6" fill="#4bb8cb"/>
<rect x="459.7" y="154.1" width="2.6" height="2.6" fill="#4bb8cb"/>
<rect x="392.1" y="160.3" width="2.6" height="2.6" fill="#4bb8cb"/>
<rect x="506.2" y="143.5" width="2.6" height="2.6" fill="#4bb8cb"/>
<rect x="488.5" y="159.0" width="2.6" height="2.6" fill="#4bb8cb"/>
<rect x="508.9" y="113.6" width="2.6" height="2.6" fill="#4bb8cb"/>
<rect x="515.7" y="124.5" width="2.6" height="2.6" fill="#4bb8cb"/>
<rect x="460.0" y="154.4" width="2.6" height="2.6" fill="#4bb8cb"/>
<rect x="451.0" y="216.1" width="2.6" height="2.6" fill="#4bb8cb"/>
<rect x="501.3" y="309.9" width="2.6" height="2.6" fill="#4bb8cb"/>
<rect x="504.8" y="265.3" width="2.6" height="2.6" fill="#4bb8cb"/>
<rect x="516.3" y="260.4" width="2.6" height="2.6" fill="#4bb8cb"/>
<rect x="424.2" y="278.5" width="2.6" height="2.6" fill="#4bb8cb"/>
<rect x="437.6" y="339.6" width="2.6" height="2.6" fill="#4bb8cb"/>
<rect x="445.2" y="350.4" width="2.6" height="2.6" fill="#4bb8cb"/>
<rect x="438.7" y="357.0" width="2.6" height="2.6" fill="#4bb8cb"/>
<rect x="459.4" y="362.4" width="2.6" height="2.6" fill="#4bb8cb"/>
<rect x="455.0" y="383.0" width="2.6" height="2.6" fill="#4bb8cb"/>
<rect x="463.7" y="383.7" width="2.6" height="2.6" fill="#4bb8cb"/>
<rect x="421.7" y="378.3" width="2.6" height="2.6" fill="#4bb8cb"/>
<rect x="419.6" y="404.4" width="2.6" height="2.6" fill="#4bb8cb"/>
<rect x="443.0" y="409.8" width="2.6" height="2.6" fill="#4bb8cb"/>
<rect x="469.1" y="421.1" width="2.6" height="2.6" fill="#4bb8cb"/>
<rect x="376.3" y="478.4" width="2.6" height="2.6" fill="#4bb8cb"/>
<rect x="383.9" y="478.4" width="2.6" height="2.6" fill="#4bb8cb"/>
<rect x="380.7" y="486.0" width="2.6" height="2.6" fill="#4bb8cb"/>
<rect x="397.5" y="486.0" width="2.6" height="2.6" fill="#4bb8cb"/>
<rect x="413.8" y="483.9" width="2.6" height="2.6" fill="#4bb8cb"/>
<rect x="422.0" y="494.2" width="2.6" height="2.6" fill="#4bb8cb"/>
<rect x="436.1" y="482.8" width="2.6" height="2.6" fill="#4bb8cb"/>
<rect x="435.5" y="492.8" width="2.6" height="2.6" fill="#4bb8cb"/>
<rect x="435.5" y="502.3" width="2.6" height="2.6" fill="#4bb8cb"/>
<rect x="445.9" y="491.5" width="2.6" height="2.6" fill="#4bb8cb"/>
<rect x="449.1" y="500.2" width="2.6" height="2.6" fill="#4bb8cb"/>
<rect x="449.1" y="484.1" width="2.6" height="2.6" fill="#4bb8cb"/>
<rect x="458.6" y="486.6" width="2.6" height="2.6" fill="#4bb8cb"/>
<rect x="466.8" y="489.6" width="2.6" height="2.6" fill="#4bb8cb"/>
<rect x="470.9" y="492.3" width="2.6" height="2.6" fill="#4bb8cb"/>
<rect x="480.4" y="501.5" width="2.6" height="2.6" fill="#4bb8cb"/>
<rect x="488.5" y="494.2" width="2.6" height="2.6" fill="#4bb8cb"/>
<rect x="492.6" y="490.9" width="2.6" height="2.6" fill="#4bb8cb"/>
<rect x="353.7" y="417.2" width="2.6" height="2.6" fill="#4bb8cb"/>
<rect x="396.7" y="348.7" width="2.6" height="2.6" fill="#4bb8cb"/>
<rect x="347.0" y="184.2" width="2.6" height="2.6" fill="#4bb8cb"/>
<rect x="363.1" y="184.2" width="2.6" height="2.6" fill="#4bb8cb"/>
<rect x="380.4" y="179.3" width="2.6" height="2.6" fill="#4bb8cb"/>
<rect x="362.7" y="196.0" width="2.6" height="2.6" fill="#4bb8cb"/>
<rect x="385.8" y="200.8" width="2.6" height="2.6" fill="#4bb8cb"/>
<rect x="367.9" y="209.9" width="2.6" height="2.6" fill="#4bb8cb"/>
<rect x="392.4" y="160.9" width="2.6" height="2.6" fill="#4bb8cb"/>
<rect x="317.7" y="166.8" width="2.6" height="2.6" fill="#4bb8cb"/>
<rect x="320.7" y="166.8" width="2.6" height="2.6" fill="#4bb8cb"/>
<rect x="324.2" y="166.8" width="2.6" height="2.6" fill="#4bb8cb"/>
<rect x="327.8" y="166.8" width="2.6" height="2.6" fill="#4bb8cb"/>
<rect x="326.6" y="170.1" width="2.6" height="2.6" fill="#4bb8cb"/>
<rect x="330.2" y="171.9" width="2.6" height="2.6" fill="#4bb8cb"/>
<rect x="334.4" y="171.3" width="2.6" height="2.6" fill="#4bb8cb"/>
<rect x="338.6" y="170.7" width="2.6" height="2.6" fill="#4bb8cb"/>
<rect x="339.8" y="168.9" width="2.6" height="2.6" fill="#4bb8cb"/>
<rect x="342.8" y="174.0" width="2.6" height="2.6" fill="#4bb8cb"/>
<rect x="346.4" y="168.5" width="2.6" height="2.6" fill="#4bb8cb"/>
<rect x="351.7" y="170.7" width="2.6" height="2.6" fill="#4bb8cb"/>
<rect x="348.7" y="174.2" width="2.6" height="2.6" fill="#4bb8cb"/>
<rect x="352.9" y="176.6" width="2.6" height="2.6" fill="#4bb8cb"/>
<rect x="349.4" y="178.4" width="2.6" height="2.6" fill="#4bb8cb"/>
<rect x="326.6" y="174.8" width="2.6" height="2.6" fill="#4bb8cb"/>
<rect x="323.0" y="179.0" width="2.6" height="2.6" fill="#4bb8cb"/>
<rect x="327.2" y="184.0" width="2.6" height="2.6" fill="#4bb8cb"/>
<rect x="326.9" y="190.7" width="2.6" height="2.6" fill="#4bb8cb"/>
<rect x="326.6" y="197.9" width="2.6" height="2.6" fill="#4bb8cb"/>
<rect x="326.6" y="204.7" width="2.6" height="2.6" fill="#4bb8cb"/>
<rect x="326.6" y="208.9" width="2.6" height="2.6" fill="#4bb8cb"/>
<rect x="324.2" y="214.7" width="2.6" height="2.6" fill="#4bb8cb"/>
<rect x="320.1" y="219.7" width="2.6" height="2.6" fill="#4bb8cb"/>
<rect x="330.2" y="219.7" width="2.6" height="2.6" fill="#4bb8cb"/>
<rect x="313.5" y="220.3" width="2.6" height="2.6" fill="#4bb8cb"/>
<rect x="315.9" y="222.7" width="2.6" height="2.6" fill="#4bb8cb"/>
<rect x="320.7" y="223.3" width="2.6" height="2.6" fill="#4bb8cb"/>
<rect x="308.6" y="180.6" width="2.6" height="2.6" fill="#4bb8cb"/>
<rect x="352.1" y="333.7" width="2.6" height="2.6" fill="#4bb8cb"/>
<rect x="355.0" y="331.2" width="2.6" height="2.6" fill="#4bb8cb"/>
<rect x="358.9" y="331.7" width="2.6" height="2.6" fill="#4bb8cb"/>
<rect x="362.7" y="331.7" width="2.6" height="2.6" fill="#4bb8cb"/>
<rect x="367.7" y="330.7" width="2.6" height="2.6" fill="#4bb8cb"/>
<rect x="370.7" y="328.3" width="2.6" height="2.6" fill="#4bb8cb"/>
<rect x="339.3" y="336.7" width="2.6" height="2.6" fill="#4bb8cb"/>
<rect x="390.7" y="340.7" width="2.6" height="2.6" fill="#4bb8cb"/>
<rect x="265.4" y="168.6" width="2.6" height="2.6" fill="#8d2a94"/>
<rect x="304.0" y="176.8" width="2.6" height="2.6" fill="#8d2a94"/>
<rect x="301.3" y="191.0" width="2.6" height="2.6" fill="#8d2a94"/>
<rect x="308.9" y="189.0" width="2.6" height="2.6" fill="#8d2a94"/>
<rect x="264.7" y="280.7" width="2.6" height="2.6" fill="#8d2a94"/>
<rect x="282.9" y="294.9" width="2.6" height="2.6" fill="#8d2a94"/>
<rect x="302.8" y="302.5" width="2.6" height="2.6" fill="#8d2a94"/>
<rect x="312.8" y="302.5" width="2.6" height="2.6" fill="#8d2a94"/>
<rect x="316.4" y="302.8" width="2.6" height="2.6" fill="#8d2a94"/>
<rect x="321.8" y="302.8" width="2.6" height="2.6" fill="#8d2a94"/>
<rect x="275.6" y="307.9" width="2.6" height="2.6" fill="#8d2a94"/>
<rect x="279.2" y="309.4" width="2.6" height="2.6" fill="#8d2a94"/>
<rect x="233.0" y="310.6" width="2.6" height="2.6" fill="#8d2a94"/>
<rect x="233.1" y="319.4" width="2.6" height="2.6" fill="#8d2a94"/>
<rect x="338.5" y="253.2" width="2.6" height="2.6" fill="#8d2a94"/>
<rect x="338.9" y="252.8" width="2.6" height="2.6" fill="#8d2a94"/>
<rect x="358.9" y="311.5" width="2.6" height="2.6" fill="#8d2a94"/>
<rect x="364.4" y="312.1" width="2.6" height="2.6" fill="#8d2a94"/>
<rect x="369.8" y="316.1" width="2.6" height="2.6" fill="#8d2a94"/>
<rect x="363.0" y="320.2" width="2.6" height="2.6" fill="#8d2a94"/>
<rect x="356.2" y="317.5" width="2.6" height="2.6" fill="#8d2a94"/>
<rect x="403.5" y="312.4" width="2.6" height="2.6" fill="#8d2a94"/>
<rect x="403.5" y="317.2" width="2.6" height="2.6" fill="#8d2a94"/>
<rect x="406.7" y="323.3" width="2.6" height="2.6" fill="#8d2a94"/>
<rect x="412.2" y="324.4" width="2.6" height="2.6" fill="#8d2a94"/>
<rect x="413.7" y="327.6" width="2.6" height="2.6" fill="#8d2a94"/>
<rect x="418.5" y="325.4" width="2.6" height="2.6" fill="#8d2a94"/>
<rect x="423.0" y="320.0" width="2.6" height="2.6" fill="#8d2a94"/>
<rect x="423.0" y="324.4" width="2.6" height="2.6" fill="#8d2a94"/>
<rect x="392.1" y="358.3" width="2.6" height="2.6" fill="#8d2a94"/>
<rect x="286.8" y="337.4" width="2.6" height="2.6" fill="#8d2a94"/>
<rect x="303.8" y="350.3" width="2.6" height="2.6" fill="#8d2a94"/>
<rect x="317.7" y="358.4" width="2.6" height="2.6" fill="#8d2a94"/>
<rect x="321.5" y="355.9" width="2.6" height="2.6" fill="#8d2a94"/>
<rect x="325.3" y="362.2" width="2.6" height="2.6" fill="#8d2a94"/>
<rect x="327.9" y="358.4" width="2.6" height="2.6" fill="#8d2a94"/>
<rect x="319.0" y="364.8" width="2.6" height="2.6" fill="#8d2a94"/>
<rect x="322.8" y="364.3" width="2.6" height="2.6" fill="#8d2a94"/>
<rect x="340.0" y="383.0" width="2.6" height="2.6" fill="#8d2a94"/>
<rect x="346.9" y="397.2" width="2.6" height="2.6" fill="#8d2a94"/>
<rect x="321.0" y="407.9" width="2.6" height="2.6" fill="#8d2a94"/>
<rect x="335.0" y="345.0" width="2.6" height="2.6" fill="#8d2a94"/>
<rect x="343.6" y="341.4" width="2.6" height="2.6" fill="#8d2a94"/>
<rect x="325.8" y="347.5" width="2.6" height="2.6" fill="#8d2a94"/>
<rect x="322.3" y="352.1" width="2.6" height="2.6" fill="#8d2a94"/>
<rect x="349.4" y="346.5" width="2.6" height="2.6" fill="#8d2a94"/>
<rect x="354.5" y="355.9" width="2.6" height="2.6" fill="#8d2a94"/>
<rect x="359.6" y="355.9" width="2.6" height="2.6" fill="#8d2a94"/>
<rect x="355.8" y="364.3" width="2.6" height="2.6" fill="#8d2a94"/>
<rect x="360.8" y="362.2" width="2.6" height="2.6" fill="#8d2a94"/>
<rect x="406.7" y="137.2" width="2.6" height="2.6" fill="#8d2a94"/>
<rect x="470.9" y="133.2" width="2.6" height="2.6" fill="#8d2a94"/>
<rect x="489.4" y="133.5" width="2.6" height="2.6" fill="#8d2a94"/>
<rect x="494.0" y="132.7" width="2.6" height="2.6" fill="#8d2a94"/>
<rect x="497.2" y="130.8" width="2.6" height="2.6" fill="#8d2a94"/>
<rect x="500.2" y="127.2" width="2.6" height="2.6" fill="#8d2a94"/>
<rect x="494.0" y="145.4" width="2.6" height="2.6" fill="#8d2a94"/>
<rect x="492.6" y="150.9" width="2.6" height="2.6" fill="#8d2a94"/>
<rect x="376.7" y="299.7" width="2.6" height="2.6" fill="#8d2a94"/>
<rect x="381.7" y="304.7" width="2.6" height="2.6" fill="#8d2a94"/>
<rect x="373.7" y="308.7" width="2.6" height="2.6" fill="#8d2a94"/>
<rect x="304.5" y="162.9" width="2.6" height="2.6" fill="#2e3c9c"/>
<rect x="302.1" y="165.9" width="2.6" height="2.6" fill="#2e3c9c"/>
<rect x="314.3" y="181.7" width="2.6" height="2.6" fill="#2e3c9c"/>
<rect x="312.7" y="191.1" width="2.6" height="2.6" fill="#2e3c9c"/>
<rect x="306.1" y="193.1" width="2.6" height="2.6" fill="#2e3c9c"/>
<rect x="300.0" y="195.9" width="2.6" height="2.6" fill="#2e3c9c"/>
<rect x="285.8" y="201.6" width="2.6" height="2.6" fill="#2e3c9c"/>
<rect x="262.1" y="211.9" width="2.6" height="2.6" fill="#2e3c9c"/>
<rect x="249.9" y="254.5" width="2.6" height="2.6" fill="#2e3c9c"/>
<rect x="262.0" y="257.5" width="2.6" height="2.6" fill="#2e3c9c"/>
<rect x="270.7" y="256.8" width="2.6" height="2.6" fill="#2e3c9c"/>
<rect x="287.4" y="249.9" width="2.6" height="2.6" fill="#2e3c9c"/>
<rect x="273.8" y="272.9" width="2.6" height="2.6" fill="#2e3c9c"/>
<rect x="265.7" y="284.4" width="2.6" height="2.6" fill="#2e3c9c"/>
<rect x="259.3" y="288.3" width="2.6" height="2.6" fill="#2e3c9c"/>
<rect x="310.0" y="287.6" width="2.6" height="2.6" fill="#2e3c9c"/>
<rect x="310.0" y="285.7" width="2.6" height="2.6" fill="#2e3c9c"/>
<rect x="296.9" y="346.5" width="2.6" height="2.6" fill="#2e3c9c"/>
<rect x="406.3" y="121.2" width="2.6" height="2.6" fill="#2e3c9c"/>
<rect x="410.0" y="123.2" width="2.6" height="2.6" fill="#2e3c9c"/>
<rect x="307.7" y="367.4" width="2.4" height="2.4" fill="#7a7a7a"/>
<rect x="314.8" y="367.9" width="2.4" height="2.4" fill="#7a7a7a"/>
<rect x="393.0" y="477.4" width="2.4" height="2.4" fill="#7a7a7a"/>
<rect x="437.8" y="485.6" width="2.4" height="2.4" fill="#7a7a7a"/>
<rect x="493.3" y="497.8" width="2.4" height="2.4" fill="#7a7a7a"/>
<rect x="498.1" y="312.2" width="2.4" height="2.4" fill="#7a7a7a"/>
<rect x="466.4" y="140.1" width="2.4" height="2.4" fill="#7a7a7a"/>
<rect x="422.6" y="275.3" width="2.4" height="2.4" fill="#7a7a7a"/>
<rect x="296.2" y="188.7" width="2.9" height="2.9" fill="#d93a30"/>
<rect x="333.8" y="165.2" width="2.9" height="2.9" fill="#d93a30"/>
<rect x="407.4" y="148.2" width="2.9" height="2.9" fill="#d93a30"/>
<rect x="485.6" y="143.6" width="2.9" height="2.9" fill="#d93a30"/>
<rect x="319.9" y="233.2" width="2.9" height="2.9" fill="#d93a30"/>
<rect x="256.1" y="259.9" width="2.9" height="2.9" fill="#d93a30"/>
<rect x="333.4" y="300.6" width="2.9" height="2.9" fill="#d93a30"/>
<rect x="375.1" y="322.8" width="2.9" height="2.9" fill="#d93a30"/>
<rect x="398.9" y="304.6" width="2.9" height="2.9" fill="#d93a30"/>
<rect x="389.2" y="327.6" width="2.9" height="2.9" fill="#d93a30"/>
<rect x="389.2" y="334.6" width="2.9" height="2.9" fill="#d93a30"/>
<rect x="297.9" y="317.4" width="2.9" height="2.9" fill="#d93a30"/>
<rect x="336.4" y="339.1" width="2.9" height="2.9" fill="#d93a30"/>
<rect x="311.1" y="363.8" width="2.9" height="2.9" fill="#d93a30"/>
<rect x="283.6" y="178.6" width="2.9" height="2.9" fill="#d93a30"/>
<polyline points="183.5,385.4 188.0,385.4" fill="none" stroke="#d93a30" stroke-width="0.7" stroke-linejoin="round" />
<rect x="187.4" y="383.2" width="4.3" height="4.3" fill="#d93a30"/>
<polyline points="183.5,399.8 188.0,399.8" fill="none" stroke="#d93a30" stroke-width="0.7" stroke-linejoin="round" stroke-dasharray="1 0.6"/>
<polygon points="191.0,399.8 187.3,398.3 187.3,401.3" fill="#d93a30" />
<polyline points="184.5,414.0 188.0,414.0" fill="none" stroke="#d93a30" stroke-width="0.5" stroke-linejoin="round" stroke-dasharray="0.8 0.6"/>
<rect x="187.4" y="411.9" width="4.3" height="4.3" fill="#d93a30"/>
<polyline points="183.5,428.1 188.0,428.1" fill="none" stroke="#f4a11c" stroke-width="0.7" stroke-linejoin="round" />
<polygon points="191.0,428.1 187.3,426.6 187.3,429.6" fill="#f4a11c" />
<polyline points="183.5,442.2 191.0,442.2" fill="none" stroke="#f6bb62" stroke-width="0.6" stroke-linejoin="round" />
<polyline points="183.5,456.4 188.0,456.4" fill="none" stroke="#4bb8cb" stroke-width="0.7" stroke-linejoin="round" />
<rect x="187.4" y="454.2" width="4.3" height="4.3" fill="#4bb8cb"/>
<polyline points="184.5,470.5 188.0,470.5" fill="none" stroke="#78cad7" stroke-width="0.5" stroke-linejoin="round" />
<rect x="187.4" y="468.4" width="4.3" height="4.3" fill="#4bb8cb"/>
<rect x="187.2" y="482.5" width="4.2" height="4.2" fill="#8a8a8a"/>
<rect x="187.2" y="496.7" width="4.2" height="4.2" fill="#3b4ba0"/>
<rect x="187.2" y="511.1" width="4.2" height="4.2" fill="#8d2a94"/>
<circle cx="288.2" cy="170.6" r="6.3" fill="#0bb04f"/>
<circle cx="289.5" cy="193.5" r="6.3" fill="#0bb04f"/>
<circle cx="353.6" cy="157.0" r="6.3" fill="#0bb04f"/>
<circle cx="484.4" cy="149.7" r="6.3" fill="#0bb04f"/>
<circle cx="278.7" cy="288.4" r="6.3" fill="#0bb04f"/>
<circle cx="357.0" cy="295.7" r="6.3" fill="#0bb04f"/>
<circle cx="387.9" cy="317.4" r="6.3" fill="#0bb04f"/>
<circle cx="382.0" cy="329.7" r="6.3" fill="#0bb04f"/>
<circle cx="399.6" cy="340.5" r="6.3" fill="#0bb04f"/>
<circle cx="355.3" cy="410.4" r="6.3" fill="#0bb04f"/>
<circle cx="393.4" cy="469.1" r="6.3" fill="#0bb04f"/>
<circle cx="295.8" cy="241.0" r="6.0" fill="#808080"/>
<polygon points="243.2,173.2 245.8,178.2 248.6,174.9" fill="#d93a30" />
<polygon points="267.2,151.0 269.4,156.2 272.5,153.0" fill="#d93a30" />
<polygon points="325.7,132.5 323.5,137.7 327.9,137.7" fill="#d93a30" />
<polygon points="366.8,111.8 364.6,117.0 369.0,117.0" fill="#d93a30" />
<polygon points="486.3,111.0 484.1,116.2 488.5,116.2" fill="#d93a30" />
<polygon points="527.4,126.0 522.2,123.8 522.2,128.2" fill="#d93a30" />
<rect x="531.2" y="123.3" width="1.1" height="3.8" fill="#9a9a9a"/>
<polygon points="197.3,214.0 199.5,219.2 202.6,216.0" fill="#f4a11c" />
<polygon points="215.6,210.3 213.8,214.5 217.4,214.5" fill="#4bb8cb" />
<text x="264.2" y="140.6" font-size="5.6" text-anchor="middle" fill="#555" style="font-family:'Liberation Sans',sans-serif;">Bitola</text>
<text x="264.2" y="147.4" font-size="5.6" text-anchor="middle" fill="#555" style="font-family:'Liberation Sans',sans-serif;">(North Macedonia)</text>
<text x="231.6" y="168.0" font-size="5.6" text-anchor="middle" fill="#555" style="font-family:'Liberation Sans',sans-serif;">Zemblak</text>
<text x="231.6" y="174.8" font-size="5.6" text-anchor="middle" fill="#555" style="font-family:'Liberation Sans',sans-serif;">(Albania)</text>
<text x="320.6" y="124.0" font-size="5.6" text-anchor="middle" fill="#555" style="font-family:'Liberation Sans',sans-serif;">Dubrovo</text>
<text x="320.6" y="130.8" font-size="5.6" text-anchor="middle" fill="#555" style="font-family:'Liberation Sans',sans-serif;">(North Macedonia)</text>
<text x="366.8" y="102.0" font-size="5.6" text-anchor="middle" fill="#555" style="font-family:'Liberation Sans',sans-serif;">Blagoevgrad</text>
<text x="366.8" y="108.8" font-size="5.6" text-anchor="middle" fill="#555" style="font-family:'Liberation Sans',sans-serif;">(Bulgaria)</text>
<text x="474.3" y="101.5" font-size="5.6" text-anchor="middle" fill="#555" style="font-family:'Liberation Sans',sans-serif;">Maritsa East</text>
<text x="474.3" y="108.3" font-size="5.6" text-anchor="middle" fill="#555" style="font-family:'Liberation Sans',sans-serif;">(Bulgaria)</text>
<text x="217.0" y="198.7" font-size="5.6" text-anchor="middle" fill="#555" style="font-family:'Liberation Sans',sans-serif;">Bistrica</text>
<text x="217.0" y="205.5" font-size="5.6" text-anchor="middle" fill="#555" style="font-family:'Liberation Sans',sans-serif;">(Albania)</text>
<text x="192.4" y="204.1" font-size="5.6" text-anchor="middle" fill="#555" style="font-family:'Liberation Sans',sans-serif;">Galatina</text>
<text x="192.4" y="210.9" font-size="5.6" text-anchor="middle" fill="#555" style="font-family:'Liberation Sans',sans-serif;">(Italy)</text>
<text x="183.4" y="108.9" font-size="11.7" fill="#4a8fd0" textLength="115.7" lengthAdjust="spacingAndGlyphs" style="font-family:'Liberation Sans',sans-serif;">Transmission System</text>
<text x="361.0" y="159.0" font-size="4.2" text-anchor="start" fill="#666" style="font-family:'Liberation Sans',sans-serif;font-style:italic">Lagadas</text>
<text x="339.0" y="168.5" font-size="4.2" text-anchor="start" fill="#666" style="font-family:'Liberation Sans',sans-serif;font-style:italic">Thessaloniki</text>
<text x="400.0" y="156.5" font-size="4.2" text-anchor="start" fill="#666" style="font-family:'Liberation Sans',sans-serif;font-style:italic">Philippi</text>
<text x="324.0" y="236.5" font-size="4.2" text-anchor="start" fill="#666" style="font-family:'Liberation Sans',sans-serif;font-style:italic">Larissa</text>
<text x="260.0" y="265.0" font-size="4.2" text-anchor="start" fill="#666" style="font-family:'Liberation Sans',sans-serif;font-style:italic">Arachthos</text>
<text x="322.0" y="300.0" font-size="4.2" text-anchor="start" fill="#666" style="font-family:'Liberation Sans',sans-serif;font-style:italic">Distomo</text>
<text x="403.0" y="307.0" font-size="4.2" text-anchor="start" fill="#666" style="font-family:'Liberation Sans',sans-serif;font-style:italic">Aliveri</text>
<text x="300.0" y="325.0" font-size="4.2" text-anchor="start" fill="#666" style="font-family:'Liberation Sans',sans-serif;font-style:italic">Patras</text>
<text x="322.0" y="340.0" font-size="4.2" text-anchor="start" fill="#666" style="font-family:'Liberation Sans',sans-serif;font-style:italic">Korinthos</text>
<text x="296.0" y="364.0" font-size="4.2" text-anchor="start" fill="#666" style="font-family:'Liberation Sans',sans-serif;font-style:italic">Megalopoli</text>
<text x="339.5" y="327.2" font-size="4.2" text-anchor="start" fill="#666" style="font-family:'Liberation Sans',sans-serif;font-style:italic">Koumoundourou</text>
<text x="368.0" y="338.5" font-size="4.2" text-anchor="start" fill="#666" style="font-family:'Liberation Sans',sans-serif;font-style:italic">Argyroupoli</text>
<text x="393.0" y="331.0" font-size="4.2" text-anchor="start" fill="#666" style="font-family:'Liberation Sans',sans-serif;font-style:italic">Pallini</text>
<text x="401.5" y="348.4" font-size="4.2" text-anchor="start" fill="#666" style="font-family:'Liberation Sans',sans-serif;font-style:italic">Lavrio</text>
<text x="270.5" y="196.0" font-size="4.2" text-anchor="start" fill="#666" style="font-family:'Liberation Sans',sans-serif;font-style:italic">Kardia</text>
<text x="294.6" y="170.6" font-size="4.2" text-anchor="start" fill="#666" style="font-family:'Liberation Sans',sans-serif;font-style:italic">Meliti</text>
<text x="295.2" y="175.8" font-size="4.2" text-anchor="start" fill="#666" style="font-family:'Liberation Sans',sans-serif;font-style:italic">Amyntaio</text>
<text x="301.0" y="188.0" font-size="4.2" text-anchor="start" fill="#666" style="font-family:'Liberation Sans',sans-serif;font-style:italic">Agios Dimitrios</text>
<text x="284.0" y="290.0" font-size="4.2" text-anchor="start" fill="#666" style="font-family:'Liberation Sans',sans-serif;font-style:italic">Acheloos</text>
<text x="363.0" y="297.0" font-size="4.2" text-anchor="start" fill="#666" style="font-family:'Liberation Sans',sans-serif;font-style:italic">Larymna</text>
<text x="199.3" y="387.4" font-size="5.9" font-weight="bold" fill="#454545" transform="translate(199.3 0) scale(0.9 1) translate(-199.3 0)" style="font-family:'Liberation Sans',sans-serif;">400kV Connection/Substation</text>
<text x="199.3" y="401.8" font-size="5.9" font-weight="bold" fill="#454545" transform="translate(199.3 0) scale(0.9 1) translate(-199.3 0)" style="font-family:'Liberation Sans',sans-serif;">400kV Interconnection</text>
<text x="199.3" y="416.0" font-size="5.9" font-weight="bold" fill="#454545" transform="translate(199.3 0) scale(0.9 1) translate(-199.3 0)" style="font-family:'Liberation Sans',sans-serif;">400kV Connection/Substation – Future projects</text>
<text x="199.3" y="430.1" font-size="5.9" font-weight="bold" fill="#454545" transform="translate(199.3 0) scale(0.9 1) translate(-199.3 0)" style="font-family:'Liberation Sans',sans-serif;">DC Interconnection</text>
<text x="199.3" y="444.2" font-size="5.9" font-weight="bold" fill="#454545" transform="translate(199.3 0) scale(0.9 1) translate(-199.3 0)" style="font-family:'Liberation Sans',sans-serif;">DC Connection – Future projects</text>
<text x="199.3" y="458.4" font-size="5.9" font-weight="bold" fill="#454545" transform="translate(199.3 0) scale(0.9 1) translate(-199.3 0)" style="font-family:'Liberation Sans',sans-serif;">150kV Connection/Substation</text>
<text x="199.3" y="472.5" font-size="5.9" font-weight="bold" fill="#454545" transform="translate(199.3 0) scale(0.9 1) translate(-199.3 0)" style="font-family:'Liberation Sans',sans-serif;">150kV Connection/Substation – Future projects</text>
<text x="199.3" y="486.6" font-size="5.9" font-weight="bold" fill="#454545" transform="translate(199.3 0) scale(0.9 1) translate(-199.3 0)" style="font-family:'Liberation Sans',sans-serif;">Thermal production unit</text>
<text x="199.3" y="500.8" font-size="5.9" font-weight="bold" fill="#454545" transform="translate(199.3 0) scale(0.9 1) translate(-199.3 0)" style="font-family:'Liberation Sans',sans-serif;">Hydro production unit</text>
<text x="199.3" y="515.2" font-size="5.9" font-weight="bold" fill="#454545" transform="translate(199.3 0) scale(0.9 1) translate(-199.3 0)" style="font-family:'Liberation Sans',sans-serif;">RES substation</text>
</svg>
<!--/MAP-->
<div id="sbar"></div>
</body></html>
